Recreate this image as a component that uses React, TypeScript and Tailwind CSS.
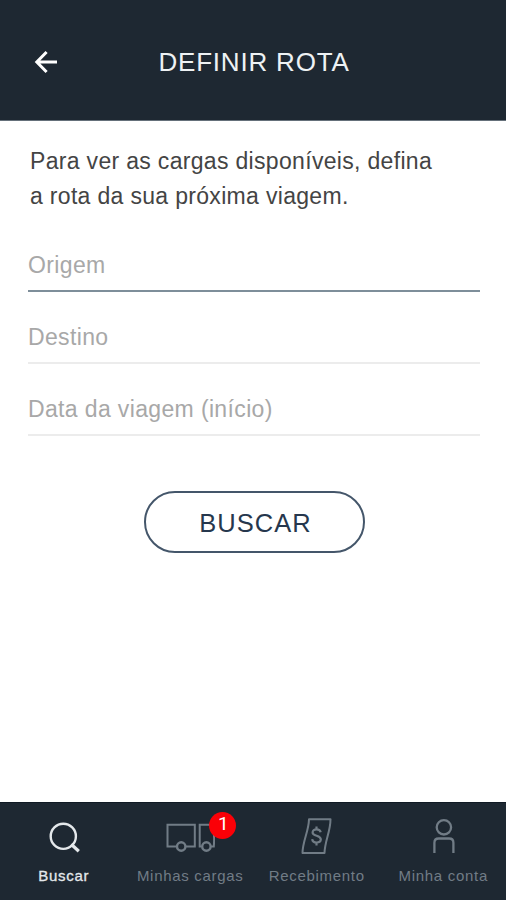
const SearchIcon = () => (
  <svg width="34" height="40" viewBox="0 0 34 40" fill="none" stroke="currentColor" strokeWidth="2.4">
    <circle cx="17.3" cy="21.3" r="12.6" />
    <path d="M25.2 29.2 32.8 36.2" strokeWidth="3.2" />
  </svg>
);

const TruckIcon = () => (
  <svg width="50" height="40" viewBox="0 0 50 40" fill="none" stroke="currentColor" strokeWidth="2">
    <path d="M11.3 31.5H2.5V9.8h27.3v21.7h-9.1M36.5 31.5h-1.8V9.8h13.1q2 9 1 21.7h-2.8" />
    <circle cx="16.2" cy="31.5" r="4.2" strokeWidth="2.4" />
    <circle cx="41.4" cy="31.5" r="4.2" strokeWidth="2.4" />
  </svg>
);

const ReceiptIcon = () => (
  <svg width="34" height="40" viewBox="0 0 34 40" fill="none" stroke="currentColor" strokeWidth="2">
    <path d="M10 4.2h21.5c0 12.4-5.6 21.2-6 33.8H3.5C3.7 25.6 9.7 16.6 10 4.2Z" strokeLinejoin="round" />
    <path d="M21.7 17.3c-.4-2-1.9-3-4.1-3-2.3 0-4 1.1-4 3.1 0 4.3 8.2 2.5 8.2 6.9 0 2.1-1.7 3.2-4.2 3.2s-4.2-1.1-4.4-3.4M17.5 11.5v3M17.5 27.5v3" strokeWidth="2.2" />
  </svg>
);

const UserIcon = () => (
  <svg width="34" height="40" viewBox="0 0 34 40" fill="none" stroke="currentColor" strokeWidth="2.3">
    <circle cx="17.9" cy="12.3" r="7.2" />
    <path d="M8.4 38V27.8q0-4.3 4.3-4.3h10.4q4.3 0 4.3 4.3V38" />
  </svg>
);

const App = () => {
  const fields = [
    { id: 1, label: "Origem", border: "border-[#7e8e9a]" },
    { id: 2, label: "Destino", border: "border-[#ececec]" },
    { id: 3, label: "Data da viagem (início)", border: "border-[#ececec]" }
  ];

  const tabs = [
    { id: 1, label: "Buscar", icon: SearchIcon, color: "text-[#e4e8eb]", weight: "[-webkit-text-stroke:0.3px]" },
    { id: 2, label: "Minhas cargas", icon: TruckIcon, color: "text-[#717c86]", weight: "font-normal", badge: 1 },
    { id: 3, label: "Recebimento", icon: ReceiptIcon, color: "text-[#717c86]", weight: "font-normal" },
    { id: 4, label: "Minha conta", icon: UserIcon, color: "text-[#717c86]", weight: "font-normal" }
  ];

  return (
    <div className="flex h-screen w-full flex-col bg-white font-['Liberation_Sans',Arial,sans-serif]">

      {/* Header */}
      <header className="grid h-[121px] shrink-0 grid-cols-[70px_1fr_68px] items-center border-b border-[#65707a] bg-[#1e2832] pt-[3px] text-white">
        <button aria-label="Voltar" className="pl-[33px]">
          <svg width="26" height="26" viewBox="0 0 26 26" fill="none" stroke="currentColor" strokeWidth="3">
            <path d="M24 13H4M13.6 3 3.8 13l9.8 10" />
          </svg>
        </button>
        <h1 className="text-center text-[26px] leading-8 tracking-[0.8px] text-[#eef2f4]">DEFINIR ROTA</h1>
      </header>

      {/* Route form */}
      <main className="flex flex-1 flex-col px-7 pt-[23px]">
        <p className="pl-0.5 text-[23px] leading-[35px] tracking-[0.32px] whitespace-nowrap text-[#444444]">
          Para ver as cargas disponíveis, defina
          <br />
          a rota da sua próxima viagem.
        </p>

        <div className="mt-[6px] w-[452px]">
          {fields.map((field) => (
            <div key={field.id} className={`h-[72px] border-b-2 pt-[28px] text-[23px] leading-[34px] tracking-[0.36px] text-[#a8a8a8] ${field.border}`}>
              {field.label}
            </div>
          ))}
        </div>

        <button className="mt-[55px] ml-[116px] h-[62px] w-[221px] rounded-full border-2 border-[#44566a] pt-0.5 pl-0.5 text-[25.5px] tracking-[1px] text-[#26374d]">
          BUSCAR
        </button>
      </main>

      {/* Bottom navigation */}
      <nav className="grid h-[98px] shrink-0 grid-cols-4 border-t border-[#101a24] bg-[#1e2832]">
        {tabs.map((tab) => (
          <div key={tab.id} className={`flex flex-col items-center pt-[12px] ${tab.color}`}>
            <div className="relative">
              <tab.icon />
              {tab.badge && (
                <span className="absolute top-[-3px] left-[44px] flex size-[27px] items-center justify-center rounded-full bg-[#fb0007] pb-[3px] pl-0.5 font-[Roboto,sans-serif] text-[19px] text-white">
                  {tab.badge}
                </span>
              )}
            </div>
            <span className={`mt-[9px] pl-px text-[15px] leading-6 tracking-[0.7px] whitespace-nowrap ${tab.weight}`}>{tab.label}</span>
          </div>
        ))}
      </nav>
    </div>
  );
};

export default App;
